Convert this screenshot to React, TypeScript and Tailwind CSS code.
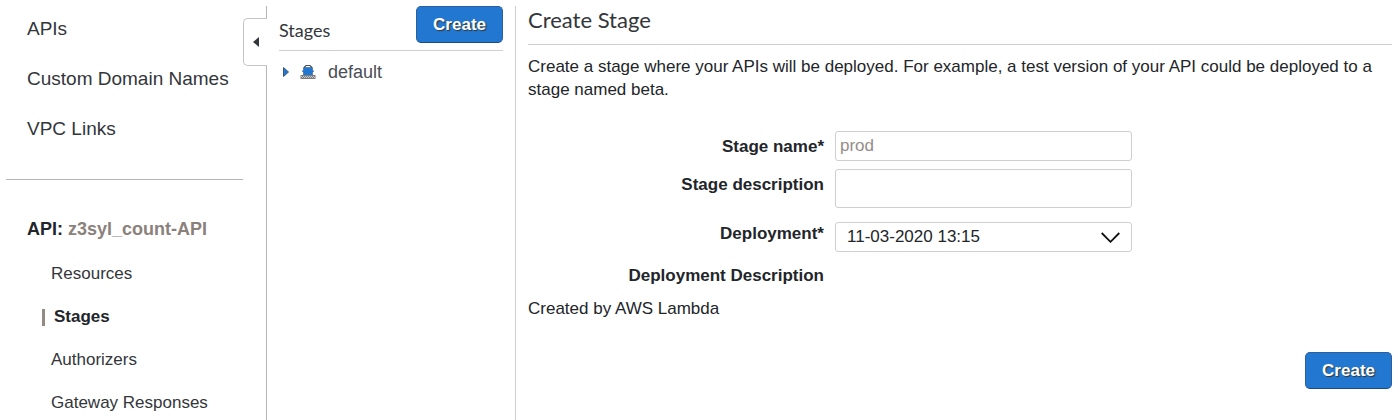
import React, { useState } from "react";

const topLinks = ["APIs", "Custom Domain Names", "VPC Links"];
const apiLinks = ["Resources", "Stages", "Authorizers", "Gateway Responses"];

function CreateButton({ type = "button" }: { type?: "button" | "submit" }) {
  return (
    <button
      type={type}
      className="h-[37px] rounded-[5px] border border-[#2c5f9e] border-b-[#1d4a80] bg-[#2277d0] px-4 text-[17px] font-bold leading-6 text-white [text-shadow:1px_1px_1px_#333]"
    >
      Create
    </button>
  );
}

function StageIcon() {
  return (
    <svg width="16" height="16" viewBox="0 0 16 16" aria-hidden="true">
      <path d="M4.500 4V3L6 1.500h4L11.500 3v1" fill="none" stroke="#4a5058" strokeWidth="1.200" />
      <path d="M3.500 3.500h9v2.500l1.200 1-1.200 1.500v3h-9v-3L2.300 7l1.200-1z" fill="#2277d0" stroke="#3b5f8a" strokeWidth=".6" />
      <path d="M.5 11h15v4H.5z" fill="#7d7d7d" />
      <path d="M1 12.500h14M2 13.500h13" stroke="#c9c9c9" strokeWidth="1" strokeDasharray="1 1" />
    </svg>
  );
}

function Sidebar() {
  return (
    <nav className="relative w-[267px] shrink-0 border-r border-[#b5b5b5] text-[#33363b]">
      <ul className="flex flex-col gap-[26px] pl-[27px] pt-[11px] text-[19px] leading-6">
        {topLinks.map((label) => (
          <li key={label}>
            <a href="#">{label}</a>
          </li>
        ))}
      </ul>
      <hr className="ml-[6px] mr-[23px] mt-[38px] border-[#b5b5b5]" />
      <h2 className="mt-[37px] pl-[27px] text-[18px] font-bold leading-6 text-[#222529]">
        API: <span className="text-[#8b817b]">z3syl_count-API</span>
      </h2>
      <ul className="mt-[21px] flex flex-col gap-[19px] text-[17px] leading-6">
        {apiLinks.map((label) =>
          label === "Stages" ? (
            <li key={label} className="flex items-center gap-[9px] pl-[42px] font-bold text-[#222529]">
              <span className="h-[17px] w-[3px] bg-[#948a85]" />
              <a href="#" aria-current="page">{label}</a>
            </li>
          ) : (
            <li key={label} className="pl-[51px]">
              <a href="#">{label}</a>
            </li>
          )
        )}
      </ul>
      <button
        type="button"
        aria-label="Collapse navigation"
        className="absolute -right-px top-3 flex h-12 w-6 items-center justify-center rounded-l-[5px] border border-r-0 border-[#c4c4c4] bg-white"
      >
        <svg width="6" height="10" viewBox="0 0 6 10" aria-hidden="true">
          <path d="M6 0v10L0 5z" fill="#33363b" />
        </svg>
      </button>
    </nav>
  );
}

function StageList() {
  return (
    <section className="w-[249px] shrink-0 border-r border-[#cfcfcf] pl-3 pr-3">
      <div className="flex h-[45px] items-start justify-between border-b border-[#cfcfcf]">
        <h2 className="pt-3 font-[Lato] text-[18px] leading-6 text-[#33363b]">Stages</h2>
        <CreateButton />
      </div>
      <a href="#" className="mt-[9px] flex items-center pl-1 text-[18px] leading-6 text-[#4a4e55]">
        <svg width="6" height="10" viewBox="0 0 6 10" aria-hidden="true">
          <path d="M.5.5v9L5.500 5z" fill="#2277d0" stroke="#3c5874" strokeWidth="1" />
        </svg>
        <span className="ml-[11px] mr-3">
          <StageIcon />
        </span>
        default
      </a>
    </section>
  );
}

function CreateStage() {
  const [deployment, setDeployment] = useState("11-03-2020 13:15");
  const label = "text-right font-bold leading-6";
  const field = "w-full rounded-[3px] border border-[#cfcfcf] bg-white";
  return (
    <main className="min-w-0 flex-1 pb-4 pl-3 pr-2 text-[17px] text-[#222529]">
      <h1 className="border-b border-[#cfcfcf] pb-[10px] font-[Lato] text-[22px] leading-7 text-[#33363b]">
        Create Stage
      </h1>
      <p className="mt-[10px] leading-[23px]">
        Create a stage where your APIs will be deployed. For example, a test version of your API could be deployed to a
        stage named beta.
      </p>
      <form onSubmit={(e) => e.preventDefault()}>
        <div className="mt-[30px] grid grid-cols-[296fr_297fr_249fr] gap-x-[11px]">
          <label htmlFor="stage-name" className={`${label} pt-1`}>
            Stage name*
          </label>
          <input
            id="stage-name"
            type="text"
            placeholder="prod"
            className={`${field} h-[30px] px-1 pb-px placeholder:text-[#958d88]`}
          />
          <label htmlFor="stage-description" className={`${label} col-start-1 mt-2 pt-1`}>
            Stage description
          </label>
          <textarea id="stage-description" className={`${field} mt-2 h-[39px] resize-none px-1`} />
          <label htmlFor="deployment" className={`${label} col-start-1 mt-[14px]`}>
            Deployment*
          </label>
          <div className="relative mt-[14px]">
            <select
              id="deployment"
              value={deployment}
              onChange={(e) => setDeployment(e.target.value)}
              className={`${field} block h-[30px] appearance-none pl-[11px] pr-9`}
            >
              <option>11-03-2020 13:15</option>
            </select>
            <svg
              className="pointer-events-none absolute right-3 top-[10px]"
              width="19"
              height="11"
              viewBox="0 0 19 11"
              aria-hidden="true"
            >
              <path d="M.7 1l8.800 8.800L18.300 1" fill="none" stroke="#111" strokeWidth="1.800" />
            </svg>
          </div>
          <div className={`${label} col-start-1 mt-3`}>Deployment Description</div>
        </div>
        <p className="mt-[9px] leading-6">Created by AWS Lambda</p>
        <div className="mt-[31px] flex justify-end">
          <CreateButton type="submit" />
        </div>
      </form>
    </main>
  );
}

export default function App() {
  return (
    <div className="flex min-h-screen bg-white pt-[6px] font-['Liberation_Sans',Arial,sans-serif]">
      <Sidebar />
      <StageList />
      <CreateStage />
    </div>
  );
}
